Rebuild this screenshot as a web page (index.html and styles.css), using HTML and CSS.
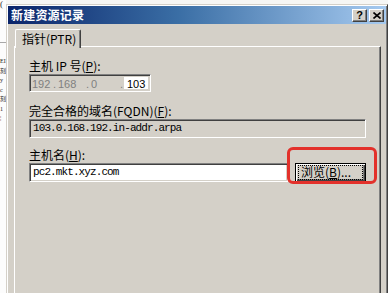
FILE: index.html
```html
<!DOCTYPE html>
<html lang="zh-CN">
<head>
<meta charset="utf-8">
<title>新建资源记录</title>
<link rel="stylesheet" href="styles.css">
</head>
<body>
<div class="screen">
  <div class="behind-left">
    <div class="paren">(</div>
    <div class="behind-rule"></div>
    <div class="behind-lines">
      <div>EI</div>
      <div>刻</div>
      <div>y</div>
      <div>c</div>
      <div>刻</div>
      <div>1</div>
      <div>¦</div>
    </div>
  </div>
  <div class="behind-top"></div>
  <div class="dialog">
    <div class="titlebar">
      <span class="title">新建资源记录</span>
      <div class="caption-btns">
        <button class="cap-btn help">?</button>
        <button class="cap-btn close">
          <svg width="8" height="7" viewBox="0 0 8 7"><path d="M0.5 0.5 L7.5 6.5 M7.5 0.5 L0.5 6.5" stroke="#000" stroke-width="1.6" fill="none"/></svg>
        </button>
      </div>
    </div>
    <div class="body">
      <div class="tabs">
        <div class="tab active">指针(PTR)</div>
      </div>
      <div class="panel">
        <div class="label">主机 IP 号(<u>P</u>):</div>
        <div class="ipbox">
          <span class="seg s1">192</span><span class="dot">.</span>
          <span class="seg s2">168</span><span class="dot">.</span>
          <span class="seg s3">0</span><span class="dot d3">.</span>
          <span class="seg last">103</span>
        </div>
        <div class="label l2">完全合格的域名(FQDN)(<u>F</u>):</div>
        <div class="edit readonly">103.0.168.192.in-addr.arpa</div>
        <div class="label l3">主机名(<u>H</u>):</div>
        <div class="hostrow">
          <div class="edit host">pc2.mkt.xyz.com</div>
          <button class="btn default"><span class="focus">浏览(<u>B</u>)...</span></button>
          <div class="highlight"></div>
        </div>
      </div>
    </div>
  </div>
</div>
</body>
</html>
```

FILE: styles.css
```css
* { box-sizing: border-box; }
html, body { margin: 0; padding: 0; }
body {
  width: 388px;
  height: 293px;
  overflow: hidden;
  background: #f7f7f5;
  font-family: "Noto Sans CJK SC", "Noto Sans", sans-serif;
  font-size: 12px;
  color: #000;
}
.screen {
  display: grid;
  grid-template-columns: 6px 382px;
  grid-template-rows: 4px 289px;
  width: 388px;
  height: 293px;
  overflow: hidden;
}
.behind-left {
  grid-column: 1;
  grid-row: 1 / 3;
  background: #fcfcfc;
  overflow: hidden;
  display: flex;
  flex-direction: column;
}
.paren {
  font-family: "Liberation Serif", serif;
  font-size: 9px;
  line-height: 9px;
  height: 9px;
  color: #333;
}
.behind-rule {
  margin-top: 33px;
  height: 1px;
  background: #a8a8a8;
}
.behind-lines {
  margin-top: 14px;
  font-family: "Liberation Serif", "Noto Sans CJK SC", serif;
  font-size: 6px;
  line-height: 9.5px;
  color: #222;
  white-space: nowrap;
}
.behind-top {
  grid-column: 2;
  grid-row: 1;
  background: #f6f6f4;
}

.dialog {
  grid-column: 2;
  grid-row: 2;
  background: #d4d0c8;
  border: 1px solid;
  border-color: #d4d0c8 #404040 #404040 #d4d0c8;
  box-shadow: inset 1px 1px #ffffff, inset -1px -1px #808080;
  padding: 1px;
  height: 300px;
}
.titlebar {
  height: 18px;
  background: linear-gradient(to right, #0a246a 0%, #3a6ea5 45%, #a6caf0 100%);
  display: flex;
  align-items: center;
  justify-content: space-between;
  padding-left: 3px;
  padding-right: 2px;
}
.title {
  color: #fff;
  font-weight: bold;
  font-size: 12px;
  line-height: 14px;
  letter-spacing: 0.2px;
}
.caption-btns {
  display: flex;
  gap: 2px;
}
.cap-btn {
  width: 15px;
  height: 13px;
  padding: 0;
  margin: 0;
  background: #d4d0c8;
  border: 1px solid;
  border-color: #ffffff #404040 #404040 #ffffff;
  box-shadow: inset -1px -1px #808080;
  display: flex;
  align-items: center;
  justify-content: center;
  font-family: "Liberation Sans", sans-serif;
  font-weight: bold;
  font-size: 11px;
  line-height: 11px;
  color: #000;
}
.body {
  padding: 5px 5px 0 6px;
}
.tabs {
  display: flex;
  padding-left: 1px;
  height: 18px;
  position: relative;
  z-index: 1;
  margin-bottom: -1px;
}
.tab {
  width: 66px;
  height: 19px;
  background: #d4d0c8;
  border-top: 1px solid #fff;
  border-left: 1px solid #fff;
  border-right: 1px solid #404040;
  box-shadow: inset -1px 0 #808080;
  border-radius: 2px 2px 0 0;
  padding-left: 6px;
  font-size: 12px;
  line-height: 17px;
}
.panel {
  border-top: 1px solid #fff;
  border-left: 1px solid #fff;
  border-right: 1px solid #404040;
  box-shadow: inset -1px 0 #808080;
  height: 260px;
  padding: 12px 14px 0 14px;
  display: flex;
  flex-direction: column;
}
.label {
  height: 14px;
  line-height: 14px;
  font-size: 12px;
  margin-bottom: 1px;
  white-space: nowrap;
}
.l2 { margin-top: 12px; }
.l3 { margin-top: 10px; }
.ipbox {
  width: 122px;
  height: 18px;
  border: 1px solid;
  border-color: #808080 #ffffff #ffffff #808080;
  box-shadow: inset 1px 1px #404040, inset -1px -1px #d4d0c8;
  background: #d4d0c8;
  display: flex;
  align-items: stretch;
  padding: 2px;
  font-family: "Liberation Sans", sans-serif;
  font-size: 11px;
  line-height: 14px;
  color: #808080;
}
.seg { display: block; }
.s1 { width: 21px; }
.s2 { width: 28px; }
.s3 { width: 29px; }
.dot { width: 5px; }
.d3 { width: 4px; }
.seg.last {
  flex: 1;
  background: #fff;
  color: #000;
  padding-left: 3px;
}
.edit {
  height: 19px;
  border: 1px solid;
  border-color: #808080 #ffffff #ffffff #808080;
  box-shadow: inset 1px 1px #404040, inset -1px -1px #d4d0c8;
  background: #fff;
  padding: 0 3px;
  font-family: "Liberation Mono", monospace;
  font-size: 11px;
  letter-spacing: -0.9px;
  line-height: 17px;
  white-space: nowrap;
  overflow: hidden;
}
.edit.readonly { background: #d4d0c8; }
.hostrow {
  display: flex;
  align-items: center;
  gap: 7px;
  position: relative;
}
.edit.host { width: 259px; }
.btn {
  width: 71px;
  height: 19px;
  margin: 0;
  padding: 0;
  background: #d4d0c8;
  font-family: "Noto Sans CJK SC", sans-serif;
  font-size: 12px;
  color: #000;
  display: flex;
  align-items: center;
  justify-content: center;
}
.btn.default {
  border: 1px solid #000;
  box-shadow: inset 1px 1px #fff, inset -1px -1px #404040, inset -2px -2px #808080;
}
.focus {
  display: block;
  width: 63px;
  height: 13px;
  line-height: 12px;
  outline: 1px dotted #000;
  text-align: left;
  padding-left: 2px;
  white-space: nowrap;
}
.highlight {
  position: absolute;
  left: 258px;
  top: -16px;
  width: 90px;
  height: 37px;
  border: 3px solid #e3312b;
  border-radius: 6px;
  pointer-events: none;
}
```
